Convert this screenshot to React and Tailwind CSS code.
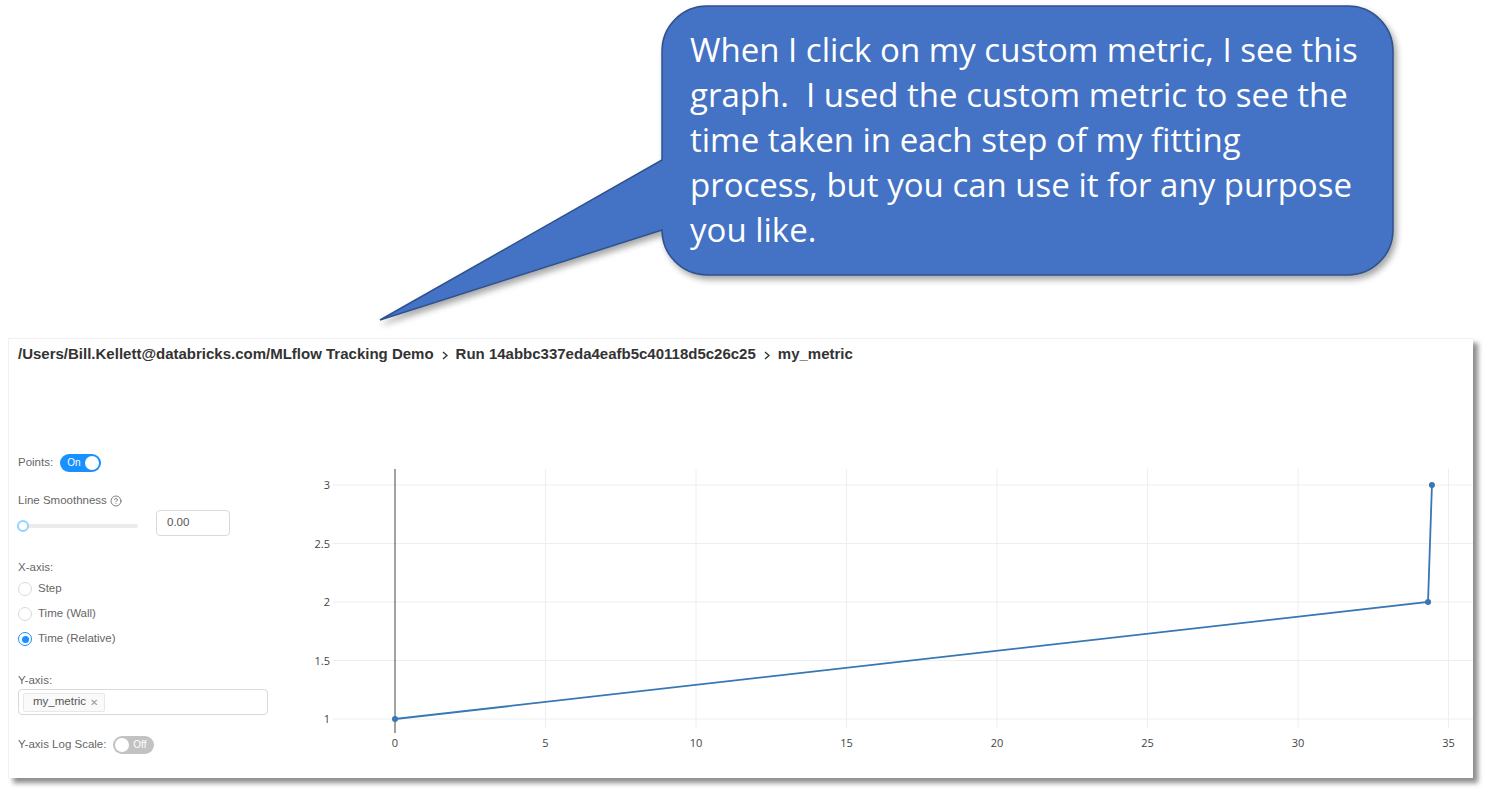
import { CircleHelp } from 'lucide-react';

const ui = { fontFamily: '"Liberation Sans", Arial, sans-serif' };

const X = v => 105 + 30.1 * v;
const Y = v => 259 - 117 * (v - 1);
const data = [[0, 1], [34.32, 2], [34.45, 3]];

function Callout() {
  return (
    <>
      <svg
        className="absolute left-0 top-0 drop-shadow-[3px_4px_3px_rgba(0,0,0,0.35)]"
        width="1485"
        height="338"
      >
        <path
          d="M707,6 H1348 A45,45 0 0 1 1393,51 V230 A45,45 0 0 1 1348,275 H707 A45,45 0 0 1 662,230 L380,320 L662,160 V51 A45,45 0 0 1 707,6 Z"
          fill="#4472c4"
          stroke="#2f528f"
          strokeWidth="1.5"
        />
      </svg>
      <div
        className="absolute left-[690px] top-[27px] text-[33px] leading-[45px] text-white whitespace-nowrap"
        style={{ fontFamily: '"Open Sans", sans-serif' }}
      >
        When I click on my custom metric, I see this<br />
        graph.&nbsp; I used the custom metric to see the<br />
        time taken in each step of my fitting<br />
        process, but you can use it for any purpose<br />
        you like.
      </div>
    </>
  );
}

function Chevron() {
  return (
    <svg width="6" height="9" viewBox="0 0 6 9" className="mx-[8px] mt-[3px]">
      <path d="M1 1 L5 4.5 L1 8" fill="none" stroke="#333" strokeWidth="1.4" />
    </svg>
  );
}

function Toggle({ on }) {
  return on ? (
    <div className="w-[41px] h-[18px] rounded-full bg-[#1890ff] flex items-center justify-between pl-[7px] pr-[2px]">
      <span className="text-[10px] text-white leading-none">On</span>
      <span className="w-[14px] h-[14px] rounded-full bg-white" />
    </div>
  ) : (
    <div className="w-[41px] h-[18px] rounded-full bg-[#c2c2c2] flex items-center justify-between pl-[2px] pr-[8px]">
      <span className="w-[14px] h-[14px] rounded-full bg-white" />
      <span className="text-[10px] text-white leading-none">Off</span>
    </div>
  );
}

function Radio({ label, checked }) {
  return (
    <div className="h-[20px] flex items-center gap-[6px]">
      <span
        className={`w-[14px] h-[14px] rounded-full border flex items-center justify-center bg-white ${checked ? 'border-[#1890ff]' : 'border-[#d9d9d9]'}`}
      >
        {checked && <span className="w-[7px] h-[7px] rounded-full bg-[#1890ff]" />}
      </span>
      <span>{label}</span>
    </div>
  );
}

function Controls() {
  return (
    <div className="w-[272px] text-[11.5px] text-[#666] flex flex-col">
      <div className="h-[20px] flex items-center gap-[7px]">
        <span>Points:</span>
        <Toggle on />
      </div>

      <div className="h-[16px] mt-[20px] flex items-center gap-[3px]">
        <span>Line Smoothness</span>
        <CircleHelp size={12} strokeWidth={1.5} color="#555" />
      </div>
      <div className="h-[26px] mt-[1px] flex items-center">
        <div className="relative w-[120px] h-[4px] rounded-full bg-[#ebebeb] mt-[5px]">
          <span className="absolute left-[-1px] top-[-4px] w-[12px] h-[12px] rounded-full bg-white border-2 border-[#91d5ff]" />
        </div>
        <div className="ml-[18px] w-[74px] h-[26px] border border-[#d9d9d9] rounded-[4px] flex items-center pl-[10px] text-[#555]">
          0.00
        </div>
      </div>

      <div className="h-[16px] mt-[24px] flex items-center">X-axis:</div>
      <div className="mt-[3px] flex flex-col gap-[5px]">
        <Radio label="Step" />
        <Radio label="Time (Wall)" />
        <Radio label="Time (Relative)" checked />
      </div>

      <div className="h-[16px] mt-[24px] flex items-center">Y-axis:</div>
      <div className="w-[250px] h-[26px] border border-[#d9d9d9] rounded-[4px] flex items-center pl-[4px]">
        <div className="h-[19px] bg-[#fafafa] border border-[#e8e8e8] rounded-[2px] flex items-center pl-[9px] pr-[6px] gap-[4px] text-[#555]">
          <span>my_metric</span>
          <span className="text-[10px] text-[#999]">✕</span>
        </div>
      </div>

      <div className="h-[20px] mt-[20px] flex items-center gap-[7px]">
        <span>Y-axis Log Scale:</span>
        <Toggle />
      </div>
    </div>
  );
}

function Chart() {
  const line = data.map(([x, y]) => `${X(x)},${Y(y)}`).join(' ');
  return (
    <svg width="1183" height="300" className="mt-[7px]" style={{ fontFamily: '"Open Sans", sans-serif' }}>
      {[5, 10, 15, 20, 25, 30, 35].map(v => (
        <line key={v} x1={X(v)} x2={X(v)} y1="9" y2="268" stroke="#eeeeee" strokeWidth="1" />
      ))}
      {[1, 1.5, 2, 2.5, 3].map(v => (
        <line key={v} x1="43" x2="1183" y1={Y(v)} y2={Y(v)} stroke="#eeeeee" strokeWidth="1" />
      ))}
      <line x1={X(0)} x2={X(0)} y1="9" y2="273" stroke="#444" strokeWidth="1" />
      {[1, 1.5, 2, 2.5, 3].map(v => (
        <text key={v} x="40" y={Y(v) + 4} textAnchor="end" fontSize="11" fill="#444">
          {v}
        </text>
      ))}
      {[0, 5, 10, 15, 20, 25, 30, 35].map(v => (
        <text key={v} x={X(v)} y="287" textAnchor="middle" fontSize="11" fill="#444">
          {v}
        </text>
      ))}
      <polyline points={line} fill="none" stroke="#3777b5" strokeWidth="1.8" />
      {data.map(([x, y]) => (
        <circle key={x} cx={X(x)} cy={Y(y)} r="3" fill="#3777b5" />
      ))}
    </svg>
  );
}

export default function App() {
  return (
    <div className="w-[1485px] h-[789px] bg-white overflow-hidden" style={ui}>
      <div className="relative h-[338px]">
        <Callout />
      </div>

      <div className="ml-[8px] w-[1465px] h-[440px] bg-white border-l border-t border-[#f0f0f0] shadow-[5px_5px_5px_rgba(0,0,0,0.45)] pl-[9px] pt-[7px]">
        <div className="flex items-center h-[16px] text-[15px] font-bold text-[#333] whitespace-nowrap">
          <span>/Users/Bill.Kellett@databricks.com/MLflow Tracking Demo</span>
          <Chevron />
          <span>Run 14abbc337eda4eafb5c40118d5c26c25</span>
          <Chevron />
          <span>my_metric</span>
        </div>

        <div className="flex items-start mt-[91px]">
          <Controls />
          <Chart />
        </div>
      </div>
    </div>
  );
}
